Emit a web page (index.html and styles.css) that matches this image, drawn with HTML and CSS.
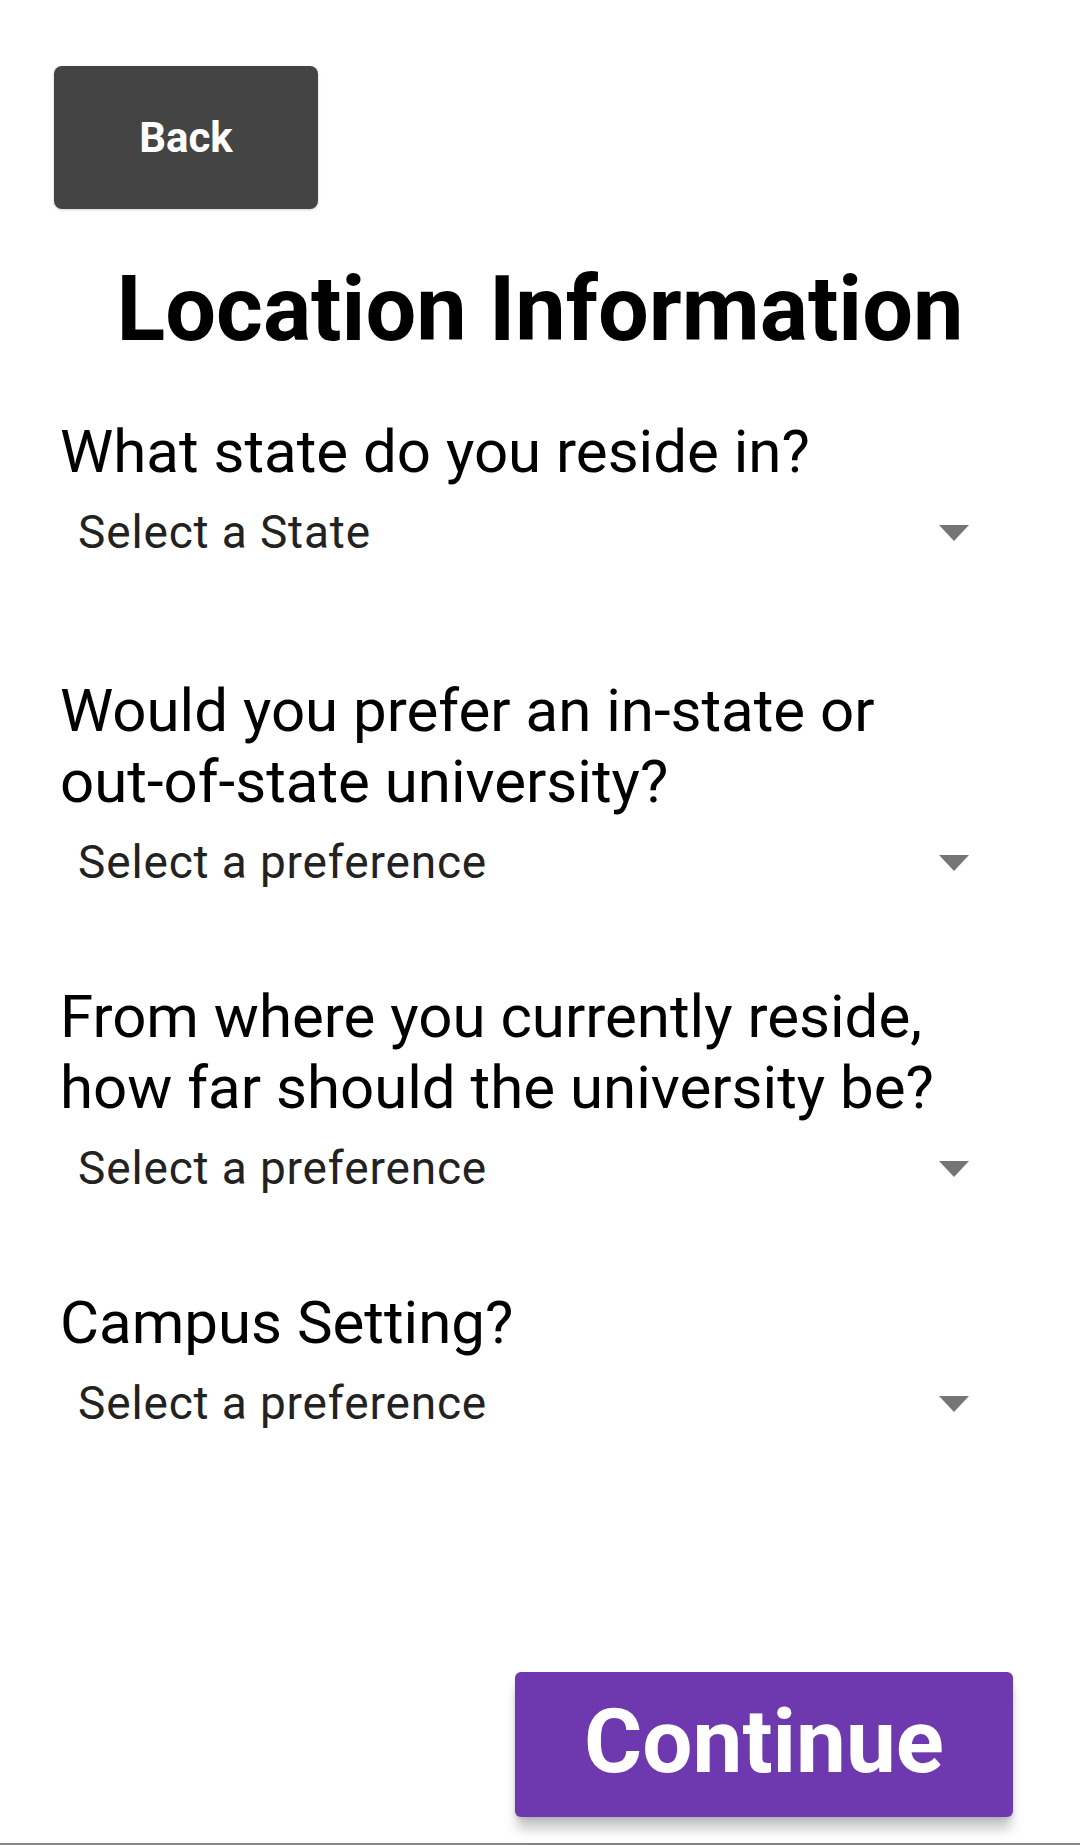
FILE: index.html
```html
<!DOCTYPE html>
<html lang="en">
<head>
<meta charset="utf-8">
<title>Location Information</title>
<link rel="stylesheet" href="styles.css">
</head>
<body>
<div class="screen">
  <div class="top">
    <button class="back" type="button">Back</button>
  </div>
  <h1 class="title">Location Information</h1>
  <div class="fields">
    <div class="field field-first">
      <div class="question">What state do you reside in?</div>
      <div class="select">
        <span class="select-text">Select a State</span>
        <svg class="arrow" width="30" height="16" viewBox="0 0 30 16"><path d="M0 0H30L15 16Z" fill="#757575"/></svg>
      </div>
    </div>
    <div class="field">
      <div class="question">Would you prefer an in-state or<br>out-of-state university?</div>
      <div class="select">
        <span class="select-text">Select a preference</span>
        <svg class="arrow" width="30" height="16" viewBox="0 0 30 16"><path d="M0 0H30L15 16Z" fill="#757575"/></svg>
      </div>
    </div>
    <div class="field">
      <div class="question">From where you currently reside,<br>how far should the university be?</div>
      <div class="select">
        <span class="select-text">Select a preference</span>
        <svg class="arrow" width="30" height="16" viewBox="0 0 30 16"><path d="M0 0H30L15 16Z" fill="#757575"/></svg>
      </div>
    </div>
    <div class="field">
      <div class="question">Campus Setting?</div>
      <div class="select">
        <span class="select-text">Select a preference</span>
        <svg class="arrow" width="30" height="16" viewBox="0 0 30 16"><path d="M0 0H30L15 16Z" fill="#757575"/></svg>
      </div>
    </div>
  </div>
  <div class="actions">
    <button class="continue" type="button">Continue</button>
  </div>
</div>
<div class="navline"></div>
</body>
</html>
```

FILE: styles.css
```css
* {
  box-sizing: border-box;
}

html, body {
  margin: 0;
  padding: 0;
  background: #ffffff;
}

body {
  font-family: Roboto, "Noto Sans", "Liberation Sans", sans-serif;
  color: #000000;
  width: 1080px;
}

.screen {
  min-height: 1843px;
  display: flex;
  flex-direction: column;
  padding: 66px 0 26px;
}

.top {
  display: flex;
  padding-left: 54px;
}

.back {
  width: 264px;
  height: 143px;
  border: none;
  border-radius: 8px;
  background: #444444;
  color: #ffffff;
  font-family: Roboto, "Liberation Sans", sans-serif;
  font-weight: 700;
  font-size: 42px;
  display: flex;
  align-items: center;
  justify-content: center;
  padding: 0;
  box-shadow: 0 1px 3px rgba(0, 0, 0, 0.18);
}

.title {
  margin: 48px 0 0;
  text-align: center;
  font-size: 90px;
  font-weight: 700;
  line-height: normal;
  letter-spacing: 0;
}

.fields {
  margin-top: 54px;
  padding: 0 60px;
  display: flex;
  flex-direction: column;
  gap: 93px;
}

.field {
  display: flex;
  flex-direction: column;
  gap: 20px;
}

.field-first {
  margin-bottom: 24px;
}

.question {
  font-size: 60px;
  line-height: normal;
  font-weight: 400;
  color: #000000;
}

.select {
  display: flex;
  align-items: center;
  justify-content: space-between;
  padding: 0 51px 0 18px;
  height: 51px;
}

.select-text {
  font-size: 46px;
  letter-spacing: 0.85px;
  line-height: 51px;
  color: #222222;
}

.arrow {
  display: block;
  flex: none;
}

.actions {
  margin-top: auto;
  display: flex;
  justify-content: flex-end;
  padding-right: 67px;
}

.continue {
  width: 498px;
  height: 145px;
  border: none;
  border-radius: 6px;
  background: #6e39af;
  color: #ffffff;
  font-family: Roboto, "Liberation Sans", sans-serif;
  font-weight: 700;
  font-size: 89px;
  padding: 0 0 6px;
  display: flex;
  align-items: center;
  justify-content: center;
  box-shadow: 0 14px 12px -2px rgba(0, 0, 0, 0.22), 0 2px 4px rgba(0, 0, 0, 0.12);
}

.navline {
  height: 2px;
  background: #848484;
}
```
